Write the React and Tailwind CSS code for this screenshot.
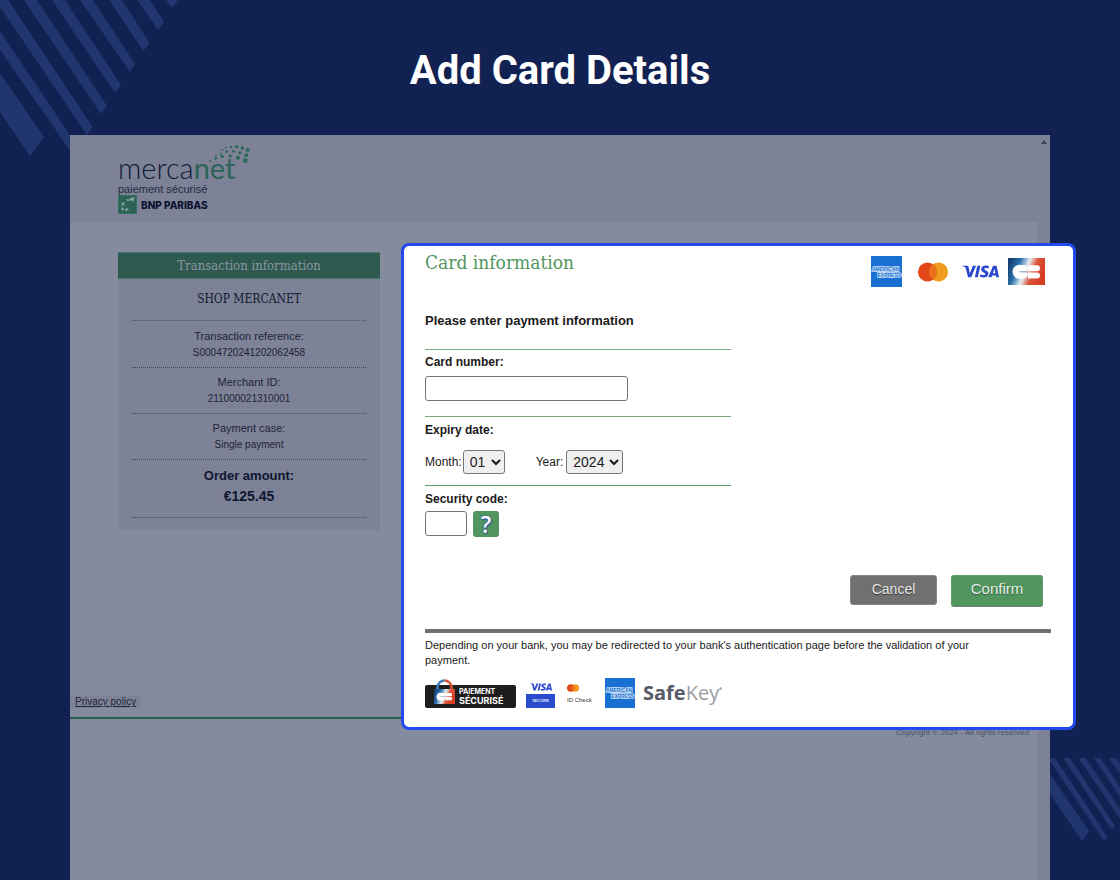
// src/App.jsx
import { SiVisa } from "react-icons/si";

const years = [2024, 2025, 2026, 2027, 2028, 2029, 2030];
const months = ["01", "02", "03", "04", "05", "06", "07", "08", "09", "10", "11", "12"];

const details = [
  { label: "Transaction reference:", value: "S0004720241202062458" },
  { label: "Merchant ID:", value: "211000021310001" },
  { label: "Payment case:", value: "Single payment" },
];

// x, y, radius
const logoDots = [
  [331, 91, 3], [347, 83, 4], [348, 75, 3], [362, 69, 3], [367, 77, 5],
  [367, 59, 3], [378, 51, 3], [380, 63, 4], [393, 49, 4], [400, 62, 4],
  [391, 76, 5], [410, 48, 5], [420, 66, 5], [414, 81, 6], [427, 52, 5],
  [443, 58, 6], [439, 74, 6], [436, 90, 7],
];

function Stripes() {
  return (
    <>
      <svg
        className="absolute left-0 top-0 h-[160px] w-[180px] fill-[#21356e]"
        viewBox="0 0 180 160"
        aria-hidden="true"
      >
        <path d="M0 73 44 137 30 156 0 112Z" />
        <path d="M0 31 78 147 73 155 0 50Z" />
        <path d="M0 0H8L92.500 127 87 135 0 7Z" />
        <path d="M24 0H37L107 106 101 114Z" />
        <path d="M52 0H65L121 85 115 93Z" />
        <path d="M80 0H93L135 64 130 72Z" />
        <path d="M109 0H122L149.500 43 143.500 51Z" />
        <path d="M137 0H150L164 22 158 30Z" />
        <path d="M166 0H178L172 8Z" />
      </svg>
      <svg
        className="absolute bottom-0 right-0 h-[122px] w-[70px] fill-[#21356e]"
        viewBox="0 0 70 122"
        aria-hidden="true"
      >
        <path d="M0 16 39 73 32 83 0 36Z" />
        <path d="M0 0H5L57.500 79 54 83 0 3Z" />
        <path d="M13 0H20L65 68 62 72Z" />
        <path d="M28.500 0H35.500L70 51V61Z" />
        <path d="M44 0H50.500L70 29V39Z" />
        <path d="M59 0H66L70 6V16Z" />
      </svg>
    </>
  );
}

function MercanetLogo() {
  return (
    <div className="relative flex w-[140px] flex-col text-[#111a36]">
      <svg
        className="absolute left-[90px] top-0 h-[22px] w-[43px] fill-[#2c6a57]"
        viewBox="324 40 129 66"
        aria-hidden="true"
      >
        {logoDots.map(([x, y, r]) => (
          <circle key={`${x}-${y}`} cx={x} cy={y} r={r} />
        ))}
      </svg>
      <div className="mt-[9px] font-[Lato] text-[29px] font-light leading-[30px]">
        merca<span className="font-normal text-[#2c6356]">net</span>
      </div>
      <div className="text-[11px] leading-[12px] text-[#222b45]">paiement sécurisé</div>
      <div className="flex items-center gap-1">
        <svg className="h-[19px] w-[19px]" viewBox="0 0 19 19" aria-hidden="true">
          <rect width="19" height="19" fill="#2e7361" />
          <rect x="1" y="1" width="17" height="17" fill="#2d6254" />
          <g fill="#7fa3a3">
            <path d="M12 3 17 2 15 7 13.500 5.500 9 6 8 4 12 4.500Z" />
            <path d="M3 7 5 8 7 7 6 9 7 11 5 10 3 12 4 9Z" />
            <path d="M4 12 6 14 5 16 3 14Z" />
            <path d="M7 14 9 13 11 14 9 15.500 8 17Z" />
          </g>
        </svg>
        <span className="font-[Inter] text-[10px] font-extrabold leading-[14px] text-[#0b1230]">
          BNP PARIBAS
        </span>
      </div>
    </div>
  );
}

function AmexLogo({ className }) {
  return (
    <svg className={className} viewBox="0 0 31 31" role="img" aria-label="American Express">
      <rect width="31" height="31" fill="#1770d2" />
      <g
        fontFamily="Liberation Sans, sans-serif"
        fontWeight="700"
        fontSize="5"
        fill="#1770d2"
        stroke="#d5e6f8"
        strokeWidth="1.400"
        paintOrder="stroke"
      >
        <text x="1" y="14.500">AMERICAN</text>
        <text x="6.500" y="21">EXPRESS</text>
      </g>
    </svg>
  );
}

function MastercardLogo({ className }) {
  return (
    <svg className={className} viewBox="0 0 30 20" role="img" aria-label="Mastercard">
      <circle cx="20.500" cy="10" r="9.500" fill="#f09c1c" />
      <circle cx="9.500" cy="10" r="9.500" fill="#e3471b" />
      <path d="M15 2.300a9.500 9.500 0 0 1 0 15.400a9.500 9.500 0 0 1 0-15.400Z" fill="#e8731c" />
    </svg>
  );
}

function CbMark() {
  return (
    <g fill="#fff">
      <circle cx="11.500" cy="13.800" r="7" />
      <path d="M12 7H15.500a4 4 0 0 1 3.500 6H12ZM12 14.400h7a4 4 0 0 1-3.500 6.200H12Z" />
      <path d="M20 7.200h9a3 3 0 0 1 0 6H20ZM20 14.400h9a3 3 0 0 1 0 6H20Z" />
      <path d="M11.500 13.200h8v1.200h-8Z" fill="#8da6c0" />
    </g>
  );
}

function CbLogo({ className }) {
  return (
    <svg className={className} viewBox="0 0 37 27" role="img" aria-label="CB">
      <defs>
        <linearGradient id="cb" x1="0" y1="0.300" x2="1" y2="0.600">
          <stop offset="0" stopColor="#173f70" />
          <stop offset="0.250" stopColor="#2d72ae" />
          <stop offset="0.480" stopColor="#e8eef5" />
          <stop offset="0.680" stopColor="#d9553a" />
          <stop offset="1" stopColor="#d63a20" />
        </linearGradient>
      </defs>
      <rect width="37" height="27" fill="url(#cb)" />
      <CbMark />
    </svg>
  );
}

function SecureBadge() {
  return (
    <div className="relative flex h-[30px] w-[91px] items-end">
      <div className="flex h-[23px] w-full flex-col justify-center rounded-[2px] bg-[#1d1d1b] pl-[34px] font-[Inter] font-bold text-white">
        <span className="text-[7px] leading-[8px]">PAIEMENT</span>
        <span className="text-[9px] leading-[9px]">SÉCURISÉ</span>
      </div>
      <svg className="absolute left-[8px] top-0 h-[27px] w-[23px]" viewBox="0 0 23 27" aria-hidden="true">
        <path d="M4.500 13V9a7 7 0 0 1 7-6.500" fill="none" stroke="#3a7db8" strokeWidth="2.600" />
        <path d="M18.500 13V9a7 7 0 0 0-7-6.500" fill="none" stroke="#d9553a" strokeWidth="2.600" />
        <svg x="1" y="11" width="21" height="15" viewBox="0 0 37 27" preserveAspectRatio="none">
          <rect width="37" height="27" fill="url(#cb)" />
          <CbMark />
        </svg>
      </svg>
    </div>
  );
}

function TransactionPanel() {
  return (
    <aside className="ml-12 mt-[30px] w-[262px] bg-[#7d8296] pb-3 text-center text-[#1d2438]">
      <h2 className="border-y border-[#45746a] bg-[#2e594f] font-['DejaVu_Serif_Condensed','DejaVu_Serif',serif] text-[13px] leading-[25px] text-[#8a95a5]">
        Transaction information
      </h2>
      <div className="mx-3.5">
        <p className="border-b border-dotted border-[#4c536a] pb-[11px] pt-2.5 font-['DejaVu_Serif_Condensed','DejaVu_Serif',serif] text-[12px] leading-5 text-[#0f1731]">
          SHOP MERCANET
        </p>
        <dl>
          {details.map((d, i) => (
            <div
              key={d.label}
              className={`border-b border-dotted border-[#3f465d] pb-1.5 ${i === 0 ? "pt-[7px]" : "pt-1.5"}`}
            >
              <dt className="text-[11px] leading-4">{d.label}</dt>
              <dd className="text-[10px] leading-[17px]">{d.value}</dd>
            </div>
          ))}
          <div className="border-b border-dotted border-[#3f465d] pb-[11px] pt-1.5 font-bold text-[#0f1731]">
            <dt className="text-[13px] leading-5">Order amount:</dt>
            <dd className="text-[14px] leading-5">€125.45</dd>
          </div>
        </dl>
      </div>
    </aside>
  );
}

function CardForm() {
  return (
    <form
      onSubmit={(e) => e.preventDefault()}
      className="relative z-10 -mb-[13px] -mr-[39px] mt-[21px] min-w-0 flex-1 rounded-lg border-[3px] border-[#2349f0] bg-white pb-[19px] pl-[21px] pr-[22px] text-[#1a1a1a]"
    >
      <div className="flex items-start justify-between pr-1.5">
        <h2 className="pt-1 font-['DejaVu_Serif_Condensed','DejaVu_Serif',serif] text-[19px] leading-6 text-[#52955f]">
          Card information
        </h2>
        <div className="flex h-[51px] items-center">
          <AmexLogo className="h-[31px] w-[31px]" />
          <MastercardLogo className="ml-4 h-5 w-[30px]" />
          <SiVisa className="ml-3.5 h-[37px] w-[37px] text-[#2b46cf]" aria-label="Visa" />
          <CbLogo className="ml-[9px] h-[27px] w-[37px]" />
        </div>
      </div>

      <div className="w-[306px] text-[12px]">
        <h3 className="mt-4 pb-5 text-[13px] font-bold leading-4">Please enter payment information</h3>

        {/* Card number */}
        <div className="border-t border-[#76ac80] pb-[15px] pt-1">
          <label htmlFor="card" className="block font-bold leading-4">
            Card number:
          </label>
          <input
            id="card"
            className="mt-1.5 block h-[25px] w-[203px] rounded-[3px] border border-[#767676] bg-white px-1 text-[14px]"
          />
        </div>

        {/* Expiry date */}
        <div
          role="group"
          aria-labelledby="expiry"
          className="border-t border-[#76ac80] pb-[11px] pt-[5px]"
        >
          <p id="expiry" className="font-bold leading-4">
            Expiry date:
          </p>
          <div className="mt-3 flex items-center">
            <label htmlFor="month">Month:</label>
            <select
              id="month"
              className="ml-px h-6 w-[42px] rounded-[3px] border border-[#767676] bg-[#efefef] pl-0.5 text-[14px]"
            >
              {months.map((m) => (
                <option key={m}>{m}</option>
              ))}
            </select>
            <label htmlFor="year" className="ml-[31px]">
              Year:
            </label>
            <select
              id="year"
              className="ml-[3px] h-6 w-[57px] rounded-[3px] border border-[#767676] bg-[#efefef] pl-0.5 text-[14px]"
            >
              {years.map((y) => (
                <option key={y}>{y}</option>
              ))}
            </select>
          </div>
        </div>

        {/* Security code */}
        <div className="border-t border-[#5c9e69] pt-[5px]">
          <label htmlFor="cvv" className="block font-bold leading-4">
            Security code:
          </label>
          <div className="mt-1 flex items-start gap-1.5">
            <input
              id="cvv"
              className="h-[25px] w-[42px] rounded-[3px] border border-[#767676] bg-white px-1 text-[14px]"
            />
            <button
              type="button"
              aria-label="Help"
              className="h-[26px] w-[26px] rounded-[3px] bg-[#52955f] font-['Open_Sans'] text-[23px] font-semibold leading-[26px] text-white [text-shadow:0_0_2px_#2a4fa0,0_0_1px_#2a4fa0,1px_1px_1px_#2a4fa0]"
            >
              ?
            </button>
          </div>
        </div>
      </div>

      <div className="mr-2 mt-[38px] flex items-start justify-end gap-3.5">
        <button
          type="button"
          className="h-[30px] w-[87px] rounded-[3px] border border-[#858585] bg-[#707070] pb-0.5 text-[14px] text-[#e8e8e8] [text-shadow:0_1px_1px_#333]"
        >
          Cancel
        </button>
        <button
          type="submit"
          className="h-8 w-[92px] rounded-[3px] border border-[#5f9d6b] border-b-[#6f7f72] bg-[#52955f] pb-1 text-[15px] text-[#e8f0ea] [text-shadow:0_1px_1px_#2d5b37]"
        >
          Confirm
        </button>
      </div>

      <div className="mt-[22px] border-t-4 border-[#707070] pt-[5px]">
        <p className="max-w-[550px] text-[11px] leading-[15px]">
          Depending on your bank, you may be redirected to your bank's authentication page before the
          validation of your payment.
        </p>
        <div className="mt-2.5 flex h-[30px] items-end">
          <SecureBadge />
          <div className="ml-2.5 flex w-[29px] flex-col items-center">
            <SiVisa className="-mb-1 h-[22px] w-[22px] text-[#2b46cf]" aria-label="Visa" />
            <span className="w-full bg-[#2a4bcb] text-center text-[4px] font-bold leading-[14px] text-[#dfe5fa]">
              SECURE
            </span>
          </div>
          <div className="ml-3 flex w-[27px] flex-col pb-1">
            <MastercardLogo className="h-2 w-3" />
            <span className="mt-1 whitespace-nowrap text-[6px] leading-[8px] text-[#333]">ID Check</span>
          </div>
          <AmexLogo className="ml-[11px] h-[30px] w-[30px]" />
          <span className="ml-2 font-['Open_Sans'] text-[20px] leading-[30px] text-[#9a9ca3]">
            <b className="text-[#575a66]">Safe</b>Key
          </span>
          <svg className="mb-[18px] h-[3px] w-[3px] fill-[#9a9ca3]" viewBox="0 0 3 3" aria-hidden="true">
            <circle cx="1.500" cy="1.500" r="1.200" />
          </svg>
        </div>
      </div>
    </form>
  );
}

export default function App() {
  return (
    <div className="relative flex min-h-screen flex-col overflow-hidden bg-[#112151] font-['Liberation_Sans',Arial,sans-serif]">
      <Stripes />
      <h1 className="pb-10 pt-[47px] text-center font-[Roboto] text-[40px] font-bold leading-[48px] text-white">
        Add Card Details
      </h1>

      <div className="relative mx-[70px] flex flex-1 bg-[#848b9e]">
        <div className="flex min-w-0 flex-1 flex-col">
          <header className="h-[87px] bg-[#7d8296] pl-12 pt-[9px]">
            <MercanetLogo />
          </header>

          <main className="flex">
            <div className="flex w-[331px] shrink-0 flex-col">
              <TransactionPanel />
              <a
                href="#privacy"
                className="mb-[9px] mt-auto self-start bg-[#7d8296] pl-[5px] pr-[5px] text-[10px] leading-[12px] text-[#1d2438] underline"
              >
                Privacy policy
              </a>
            </div>
            <CardForm />
          </main>

          <footer className="border-t-2 border-[#2e5f55] pr-2 pt-[9px] text-right text-[8px] leading-[10px] text-[#4a5268]">
            Copyright © 2024 - All rights reserved
          </footer>
        </div>

        {/* Scrollbar */}
        <div className="flex w-[13px] justify-center bg-[#7d8296] pt-[5px]">
          <svg className="h-1 w-1.5 fill-[#3c435c]" viewBox="0 0 6 4" aria-hidden="true">
            <path d="M3 0 6 4H0Z" />
          </svg>
        </div>
      </div>
    </div>
  );
}
